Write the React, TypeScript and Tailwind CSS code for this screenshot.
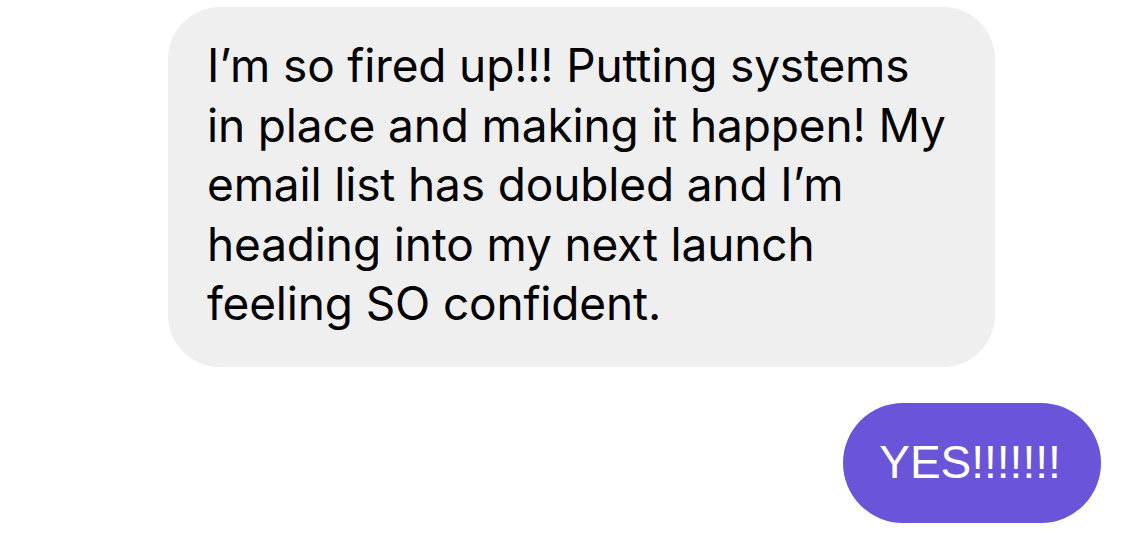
import * as React from "react";

const lines = [
    "I’m so fired up!!! Putting systems",
    "in place and making it happen! My",
    "email list has doubled and I’m",
    "heading into my next launch",
    "feeling SO confident.",
];

export default function App() {
    return (
        <div className="flex h-[535px] w-full flex-col bg-white font-['Liberation_Sans',Arial,sans-serif]">
            <div className="ml-[168px] mt-[7px] w-[827px] rounded-[52px] bg-[#efefef] pb-[33px] pl-[39px] pr-[30px] pt-[29px] font-['Inter',sans-serif] text-[46px] leading-[59.5px] tracking-[-0.15px] text-black">
                {lines.map((line) => (
                    <div key={line} className="whitespace-nowrap">
                        {line}
                    </div>
                ))}
            </div>
            <div className="mr-[24px] mt-[36px] flex h-[120px] w-[258px] items-center justify-center self-end rounded-full bg-[#6a55da] pr-[4px] text-[46px] text-white">
                YES!!!!!!!
            </div>
        </div>
    );
}
